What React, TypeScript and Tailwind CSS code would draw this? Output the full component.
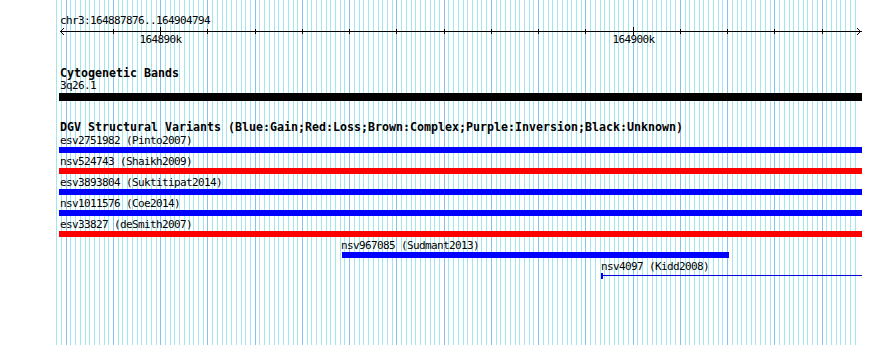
import React from "react";

const START = 164887876;
const END = 164904794;
const SCALE = 0.04724;
const X0 = 60.4;
const px = (bp: number) => Math.floor(X0 + (bp - START) * SCALE);

function Grid() {
  const lines: React.ReactElement[] = [];
  for (let bp = 164887800; bp <= END; bp += 100) {
    const x = px(bp);
    const major = bp % 1000 === 0;
    lines.push(
      <line
        key={bp}
        x1={x + 0.5}
        x2={x + 0.5}
        y1={0}
        y2={345}
        stroke={major ? "#88c2ee" : "#a4e6ee"}
        strokeWidth={1}
      />
    );
  }
  return (
    <svg
      className="absolute inset-0"
      width={890}
      height={345}
      shapeRendering="crispEdges"
    >
      {lines}
    </svg>
  );
}

function Ruler() {
  const ticks: React.ReactElement[] = [];
  for (let bp = 164889000; bp <= 164904000; bp += 1000) {
    const x = px(bp) + 0.5;
    const major = bp % 10000 === 0;
    ticks.push(
      <line
        key={bp}
        x1={x}
        x2={x}
        y1={major ? 0 : 2}
        y2={major ? 9 : 7}
        stroke="#000"
        strokeWidth={1}
      />
    );
    if (major) {
      ticks.push(
        <text
          key={"t" + bp}
          x={x}
          y={16}
          textAnchor="middle"
          fontSize={11}
          letterSpacing={-0.62}
          fill="#000"
          fontFamily="'DejaVu Sans Mono', monospace"
        >
          {bp / 1000}k
        </text>
      );
    }
  }
  return (
    <svg width={890} height={20} className="block" shapeRendering="crispEdges">
      <line x1={60} x2={862} y1={4.5} y2={4.5} stroke="#000" strokeWidth={1} />
      <polyline
        points="64,1 60.5,4.5 64,8"
        fill="none"
        stroke="#000"
        strokeWidth={1}
      />
      <polyline
        points="857,1 860.5,4.5 857,8"
        fill="none"
        stroke="#000"
        strokeWidth={1}
      />
      {ticks}
    </svg>
  );
}

type Feature = {
  label: string;
  textLeft: number;
  barLeft: number;
  barRight: number;
  color: string;
  thin?: boolean;
};

const features: Feature[] = [
  { label: "esv2751982 (Pinto2007)", textLeft: 60, barLeft: 59, barRight: 862, color: "#0000ff" },
  { label: "nsv524743 (Shaikh2009)", textLeft: 60, barLeft: 59, barRight: 862, color: "#ff0000" },
  { label: "esv3893804 (Suktitipat2014)", textLeft: 60, barLeft: 59, barRight: 862, color: "#0000ff" },
  { label: "nsv1011576 (Coe2014)", textLeft: 60, barLeft: 59, barRight: 862, color: "#0000ff" },
  { label: "esv33827 (deSmith2007)", textLeft: 60, barLeft: 59, barRight: 862, color: "#ff0000" },
  { label: "nsv967085 (Sudmant2013)", textLeft: 341, barLeft: 342, barRight: 729, color: "#0000ff" },
  { label: "nsv4097 (Kidd2008)", textLeft: 601, barLeft: 601, barRight: 862, color: "#0000ff", thin: true },
];

const small = "h-[12px] leading-[12px] text-[11px] tracking-[-0.62px] text-black whitespace-nowrap";
const bold = "h-[13px] leading-[13px] text-[11.63px] font-bold text-black whitespace-nowrap";

function FeatureRow({ f }: { f: Feature }) {
  return (
    <div className="h-[21px] flex flex-col">
      <div className={small} style={{ marginLeft: f.textLeft }}>
        {f.label}
      </div>
      {f.thin ? (
        <div
          className="relative h-[6px] flex items-start"
          style={{ marginLeft: f.barLeft, width: f.barRight - f.barLeft }}
        >
          <div className="w-[2px] h-[6px] bg-[#0000ff]" />
          <div className="flex-1 h-[1px] mt-[2px] bg-[#0000e0]" />
        </div>
      ) : (
        <div
          className="h-[6px]"
          style={{
            marginLeft: f.barLeft,
            width: f.barRight - f.barLeft,
            backgroundColor: f.color,
          }}
        />
      )}
    </div>
  );
}

export default function App() {
  return (
    <div className="relative w-[890px] h-[345px] overflow-hidden bg-white font-['DejaVu_Sans_Mono',monospace]">
      <Grid />
      <div className="relative flex flex-col">
        <div className={`${small} mt-[15px] ml-[60px]`}>chr3:164887876..164904794</div>
        <Ruler />
        <div className={`${bold} mt-[20px] ml-[60px]`}>Cytogenetic Bands</div>
        <div className={`${small} ml-[60px]`}>3q26.1</div>
        <div className="mt-[1px] ml-[59px] w-[803px] h-[8px] bg-black" />
        <div className={`${bold} mt-[20px] ml-[60px]`}>
          DGV Structural Variants (Blue:Gain;Red:Loss;Brown:Complex;Purple:Inversion;Black:Unknown)
        </div>
        <div className="mt-[1px] flex flex-col">
          {features.map((f) => (
            <FeatureRow key={f.label} f={f} />
          ))}
        </div>
      </div>
    </div>
  );
}
